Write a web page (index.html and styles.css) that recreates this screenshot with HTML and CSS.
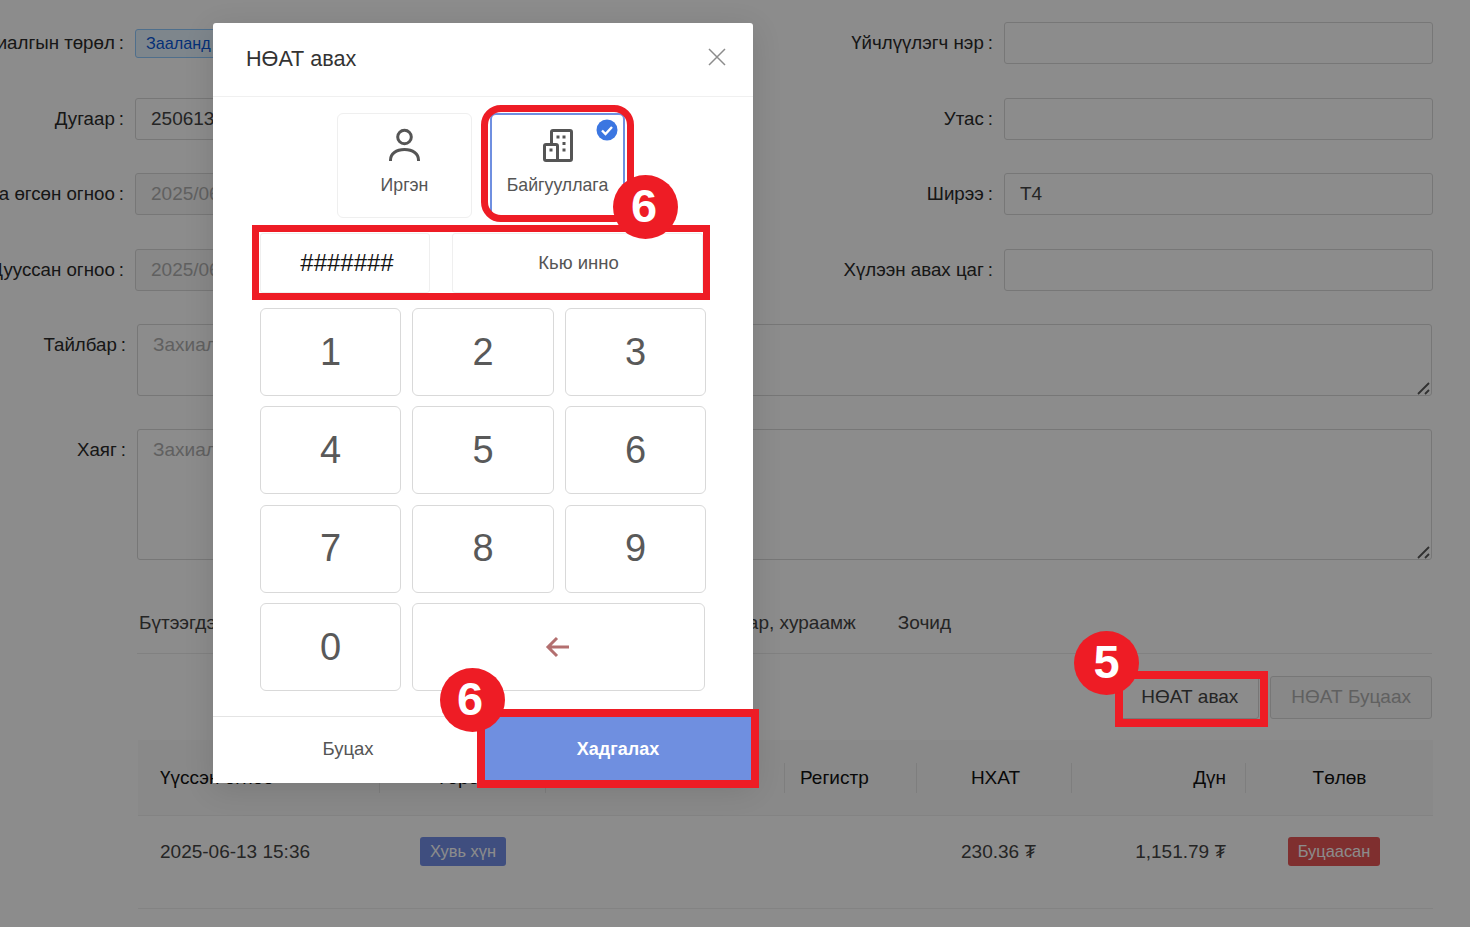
FILE: index.html
```html
<!DOCTYPE html>
<html lang="mn">
<head>
  <meta charset="UTF-8">
  <meta name="viewport" content="width=device-width, initial-scale=1.0">
  <title>НӨАТ авах</title>
  <link rel="stylesheet" href="styles.css">
</head>
<body>
  <div class="page">
    <div class="form-grid">
      <label class="field-label">Захиалгын төрөл<span class="colon">:</span></label>
      <div class="field-tag"><span class="tag">Зааланд</span></div>
      <label class="field-label">Үйчлүүлэгч нэр<span class="colon">:</span></label>
      <input type="text" class="text-input">

      <label class="field-label">Дугаар<span class="colon">:</span></label>
      <input type="text" class="text-input" value="250613001">
      <label class="field-label">Утас<span class="colon">:</span></label>
      <input type="text" class="text-input">

      <label class="field-label">Захиалга өгсөн огноо<span class="colon">:</span></label>
      <input type="text" class="text-input" value="2025/06/13 15:36" disabled>
      <label class="field-label">Ширээ<span class="colon">:</span></label>
      <input type="text" class="text-input" value="T4">

      <label class="field-label">Дууссан огноо<span class="colon">:</span></label>
      <input type="text" class="text-input" value="2025/06/13 15:40" disabled>
      <label class="field-label">Хүлээн авах цаг<span class="colon">:</span></label>
      <input type="text" class="text-input">
    </div>

    <div class="note-grid">
      <label class="field-label note-label">Тайлбар<span class="colon">:</span></label>
      <div class="note-box">
        <textarea class="note-input note-short" placeholder="Захиалгын тайлбар"></textarea>
        <svg class="note-grip" width="14" height="14" viewBox="0 0 14 14" fill="none" stroke="#5a5a5a" stroke-width="1.800">
          <path d="M2 13L13 2M9 13l4-4"/>
        </svg>
      </div>
      <label class="field-label note-label">Хаяг<span class="colon">:</span></label>
      <div class="note-box">
        <textarea class="note-input note-tall" placeholder="Захиалгын хаяг"></textarea>
        <svg class="note-grip" width="14" height="14" viewBox="0 0 14 14" fill="none" stroke="#5a5a5a" stroke-width="1.800">
          <path d="M2 13L13 2M9 13l4-4"/>
        </svg>
      </div>
    </div>

    <div class="tabs">
      <span>Бүтээгдэхүүн</span>
      <span class="tab-push">Татвар, хураамж</span>
      <span>Зочид</span>
    </div>

    <div class="actions">
      <button class="btn">НӨАТ авах</button>
      <button class="btn" disabled>НӨАТ Буцаах</button>
    </div>

    <table class="bill-table">
      <colgroup>
        <col class="col-date"><col class="col-type"><col class="col-gap">
        <col class="col-reg"><col class="col-vat"><col class="col-sum"><col class="col-pay">
      </colgroup>
      <thead>
        <tr>
          <th>Үүссэн огноо</th>
          <th class="center">Төрөл</th>
          <th></th>
          <th class="reg">Регистр</th>
          <th class="center vat">НХАТ</th>
          <th class="right">Дүн</th>
          <th class="center">Төлөв</th>
        </tr>
      </thead>
      <tbody>
        <tr>
          <td>2025-06-13 15:36</td>
          <td class="center"><span class="status status-blue">Хувь хүн</span></td>
          <td></td>
          <td></td>
          <td class="center vat">230.36 ₮</td>
          <td class="right">1,151.79 ₮</td>
          <td class="center"><span class="status status-red">Буцаасан</span></td>
        </tr>
      </tbody>
    </table>
  </div>

  <div class="mask"></div>

  <div class="modal">
    <div class="modal-head">
      <span class="modal-title">НӨАТ авах</span>
      <svg class="modal-close" width="18" height="18" viewBox="0 0 18 18" fill="none" stroke="#8c8c8c" stroke-width="1.500">
        <path d="M1 1l16 16M17 1L1 17"/>
      </svg>
    </div>

    <div class="type-row">
      <div class="type-card">
        <svg width="36" height="36" viewBox="0 0 36 36" fill="none" stroke="#555" stroke-width="3">
          <circle cx="17.500" cy="9" r="6.800"/>
          <path d="M3.500 33v-1C3.500 26 9 21.500 17.500 21.500S31.500 26 31.500 32v1"/>
        </svg>
        <span>Иргэн</span>
      </div>
      <div class="type-card type-card-active">
        <svg width="36" height="36" viewBox="0 0 36 36" fill="none" stroke="#555" stroke-width="3">
          <path d="M11.500 16.500V4A1.500 1.500 0 0 1 13 2.500h17A1.500 1.500 0 0 1 31.500 4v27a1.500 1.500 0 0 1-1.500 1.500H6A1.500 1.500 0 0 1 4.500 31V18A1.500 1.500 0 0 1 6 16.500h10A1.500 1.500 0 0 1 17.500 18v14.500"/>
          <path d="M16.500 9h3M22.500 9h3M22.500 15.500h3M22.500 22h3M9.500 22h3"/>
        </svg>
        <span>Байгууллага</span>
        <svg class="type-check" width="22" height="22" viewBox="0 0 22 22">
          <circle cx="11" cy="11" r="10.500" fill="#3b76e1"/>
          <path d="M6 11.500l3.500 3.500L16 8" fill="none" stroke="#fff" stroke-width="2.400"/>
        </svg>
      </div>
    </div>

    <div class="tin-row">
      <div class="tin-box tin-value">#######</div>
      <div class="tin-box tin-name">Кью инно</div>
    </div>

    <div class="keypad">
      <button class="key">1</button>
      <button class="key">2</button>
      <button class="key">3</button>
      <button class="key">4</button>
      <button class="key">5</button>
      <button class="key">6</button>
      <button class="key">7</button>
      <button class="key">8</button>
      <button class="key">9</button>
      <button class="key">0</button>
      <button class="key key-back">
        <svg width="26" height="24" viewBox="0 0 26 24" fill="none" stroke="#b36f6f" stroke-width="3">
          <path d="M24 12H3M12 3l-9 9 9 9"/>
        </svg>
      </button>
    </div>

    <div class="modal-foot">
      <button class="foot-btn">Буцах</button>
      <button class="foot-btn foot-save">Хадгалах</button>
    </div>
  </div>

  <!-- guide marks drawn over the screenshot -->
  <div class="mark mark-card"></div>
  <div class="mark mark-tin"></div>
  <div class="mark mark-save"></div>
  <div class="mark mark-vat"></div>
  <div class="step step-card">6</div>
  <div class="step step-save">6</div>
  <div class="step step-vat">5</div>
</body>
</html>
```

FILE: styles.css
```css
html, body {
  margin: 0;
  height: 100%;
  overflow: hidden;
}
body {
  font-family: "Liberation Sans", Arial, sans-serif;
  font-size: 19px;
  color: #1f1f1f;
  background-color: #fff;
}
.page {
  height: 927px;
  box-sizing: border-box;
  padding: 22px 37px 0 0;
}
.form-grid {
  display: grid;
  grid-template-columns: 125px 1fr 254px 429px;
  grid-auto-rows: 42px;
  column-gap: 10px;
  row-gap: 33.500px;
}
.field-label {
  display: flex;
  justify-content: flex-end;
  align-items: center;
  white-space: nowrap;
  font-size: 18.700px;
  color: #2a2a2a;
}
.colon {
  margin-left: 4px;
  margin-right: 1px;
}
.field-tag {
  display: flex;
  align-items: center;
}
.tag {
  padding: 3px 10px;
  font-size: 16.200px;
  line-height: 21px;
  color: #0958d9;
  background-color: #e6f4ff;
  border: 1px solid #91caff;
  border-radius: 3px;
}
.text-input, .note-input {
  box-sizing: border-box;
  width: 100%;
  margin: 0;
  padding: 0 15px;
  font-family: inherit;
  font-size: 19px;
  color: #444;
  background-color: #fff;
  border: 1px solid #d9d9d9;
  border-radius: 3px;
}
.text-input:disabled {
  color: #b0b0b0;
  background-color: #f7f7f7;
  -webkit-text-fill-color: #b0b0b0;
  opacity: 1;
}
.note-grid {
  display: grid;
  grid-template-columns: 127px 1fr;
  column-gap: 10px;
  row-gap: 33px;
  margin: 33.500px 1px 0 0;
}
.note-label {
  align-items: flex-start;
  padding-top: 10px;
}
.note-box {
  position: relative;
}
.note-input {
  display: block;
  padding: 9px 15px;
  resize: none;
}
.note-input::placeholder {
  color: #b0b0b0;
}
.note-grip {
  position: absolute;
  right: 2px;
  bottom: 1px;
}
.note-short {
  height: 72px;
}
.note-tall {
  height: 131px;
}
.tabs {
  display: flex;
  gap: 42px;
  height: 49px;
  margin: 44px 1px 0 137px;
  padding: 0 481px 0 2px;
  color: #444;
  border-bottom: 1px solid #ececec;
  line-height: 38px;
}
.tab-push {
  margin-left: auto;
}
.actions {
  display: flex;
  justify-content: flex-end;
  gap: 11px;
  margin: 22px 1px 0 0;
}
.btn {
  height: 43px;
  padding: 0 20px 2px;
  font-family: inherit;
  font-size: 19px;
  color: #444;
  background-color: #fff;
  border: 1px solid #d9d9d9;
  border-radius: 3px;
}
.btn:disabled {
  color: #b0b0b0;
  background-color: #f7f7f7;
}
.bill-table {
  width: 1295px;
  margin: 21px 0 0 138px;
  border-collapse: collapse;
  table-layout: fixed;
}
.col-date { width: 242px; }
.col-type { width: 166px; }
.col-gap { width: 239px; }
.col-reg { width: 132px; }
.col-vat { width: 155px; }
.col-sum { width: 174px; }
.col-pay { width: 187px; }
.bill-table th {
  position: relative;
  height: 75px;
  padding: 2px 22px 0 22px;
  box-sizing: border-box;
  font-weight: 400;
  text-align: left;
  color: #111;
  background-color: #fafafa;
  border-bottom: 1px solid #efefef;
}
.bill-table th:not(:last-child)::after {
  content: "";
  position: absolute;
  top: 23px;
  right: 0;
  width: 1px;
  height: 30px;
  background-color: #e6e6e6;
}
.bill-table th.reg {
  padding-left: 15px;
}
.bill-table th.right {
  padding-right: 20px;
}
.bill-table td {
  height: 93px;
  padding: 0 20px 20px 22px;
  box-sizing: border-box;
  color: #444;
  border-bottom: 1px solid #efefef;
}
.bill-table .center {
  text-align: center;
}
.bill-table .right {
  text-align: right;
}
.bill-table th.vat {
  padding-left: 24px;
}
.bill-table td.vat {
  padding-left: 28px;
}
.status {
  display: inline-block;
  padding: 0 10px;
  height: 29px;
  line-height: 29px;
  font-size: 16.400px;
  color: #fff;
  vertical-align: -2px;
  border-radius: 3px;
}
.status-blue {
  margin-right: 2px;
  background-color: #738fe8;
}
.status-red {
  margin-right: 13px;
  background-color: #e75656;
}
.mask {
  position: absolute;
  top: 0;
  left: 0;
  right: 0;
  bottom: 0;
  background-color: rgba(0, 0, 0, 0.45);
}
.modal {
  position: absolute;
  top: 23px;
  left: 213px;
  width: 540px;
  background-color: #fff;
  border-radius: 3px;
  box-shadow: 0 6px 30px rgba(0, 0, 0, 0.12);
}
.modal-head {
  display: flex;
  justify-content: space-between;
  align-items: center;
  height: 74px;
  box-sizing: border-box;
  padding: 0 27px 2px 33px;
  border-bottom: 1px solid #f0f0f0;
}
.modal-title {
  font-size: 21.600px;
  color: #333;
}
.modal-close {
  margin-top: -3px;
}
.type-row {
  display: flex;
  justify-content: center;
  gap: 18px;
  margin: 16px 4px 0 0;
}
.type-card {
  position: relative;
  display: flex;
  flex-direction: column;
  align-items: center;
  width: 135px;
  height: 105px;
  box-sizing: border-box;
  padding-top: 14px;
  gap: 11px;
  font-size: 17.700px;
  color: #555;
  border: 1px solid #efefef;
  border-radius: 6px;
}
.type-card-active {
  padding-top: 13px;
  border: 2px solid #6f8fe0;
}
.type-check {
  position: absolute;
  top: 4px;
  right: 5px;
}
.tin-row {
  display: flex;
  gap: 22px;
  margin: 15px 50px 0 47px;
}
.tin-box {
  display: flex;
  justify-content: center;
  align-items: center;
  height: 60px;
  box-sizing: border-box;
  border: 1px solid #efefef;
  border-radius: 3px;
}
.tin-value {
  width: 170px;
  padding-left: 4px;
  font-size: 24px;
  color: #111;
}
.tin-name {
  flex: 1;
  padding-left: 2px;
  font-size: 18.500px;
  color: #555;
}
.keypad {
  display: grid;
  grid-template-columns: 141px 142px 141px;
  grid-auto-rows: 88px;
  column-gap: 11px;
  row-gap: 10.400px;
  margin: 15px 0 0 47px;
}
.key {
  display: flex;
  justify-content: center;
  align-items: center;
  padding: 0;
  font-family: inherit;
  font-size: 38px;
  color: #595959;
  background-color: #fff;
  border: 1px solid #d9d9d9;
  border-radius: 6px;
}
.key-back {
  grid-column: span 2;
  margin-right: 1px;
  padding-right: 2px;
}
.modal-foot {
  display: flex;
  height: 67px;
  box-sizing: border-box;
  margin-top: 25px;
  border-top: 1px solid #e4e4e4;
}
.foot-btn {
  flex: 1;
  padding: 0 0 2px;
  font-family: inherit;
  font-size: 18.500px;
  color: #555;
  background-color: #fff;
  border: none;
}
.foot-save {
  font-size: 18px;
  font-weight: 700;
  color: #fff;
  background-color: #6f8fe0;
}
.mark {
  position: absolute;
  box-sizing: border-box;
  border: 8px solid #ee1c25;
}
.mark-card {
  top: 105px;
  left: 481px;
  width: 153px;
  height: 117px;
  border-width: 7px;
  border-radius: 20px;
}
.mark-tin {
  top: 225px;
  left: 252px;
  width: 458px;
  height: 75px;
  border-width: 7px;
}
.mark-save {
  top: 709px;
  left: 477px;
  width: 282px;
  height: 79px;
}
.mark-vat {
  top: 671px;
  left: 1115px;
  width: 153px;
  height: 56px;
}
.step {
  position: absolute;
  width: 65px;
  height: 64px;
  font-size: 47px;
  font-weight: 700;
  line-height: 61px;
  text-align: center;
  color: #fff;
  background-color: #ee1c25;
  border-radius: 50%;
}
.step-card {
  top: 175px;
  left: 613px;
  text-indent: -3px;
}
.step-save {
  top: 668px;
  left: 440px;
  text-indent: -5px;
}
.step-vat {
  top: 631px;
  left: 1074px;
}
```
